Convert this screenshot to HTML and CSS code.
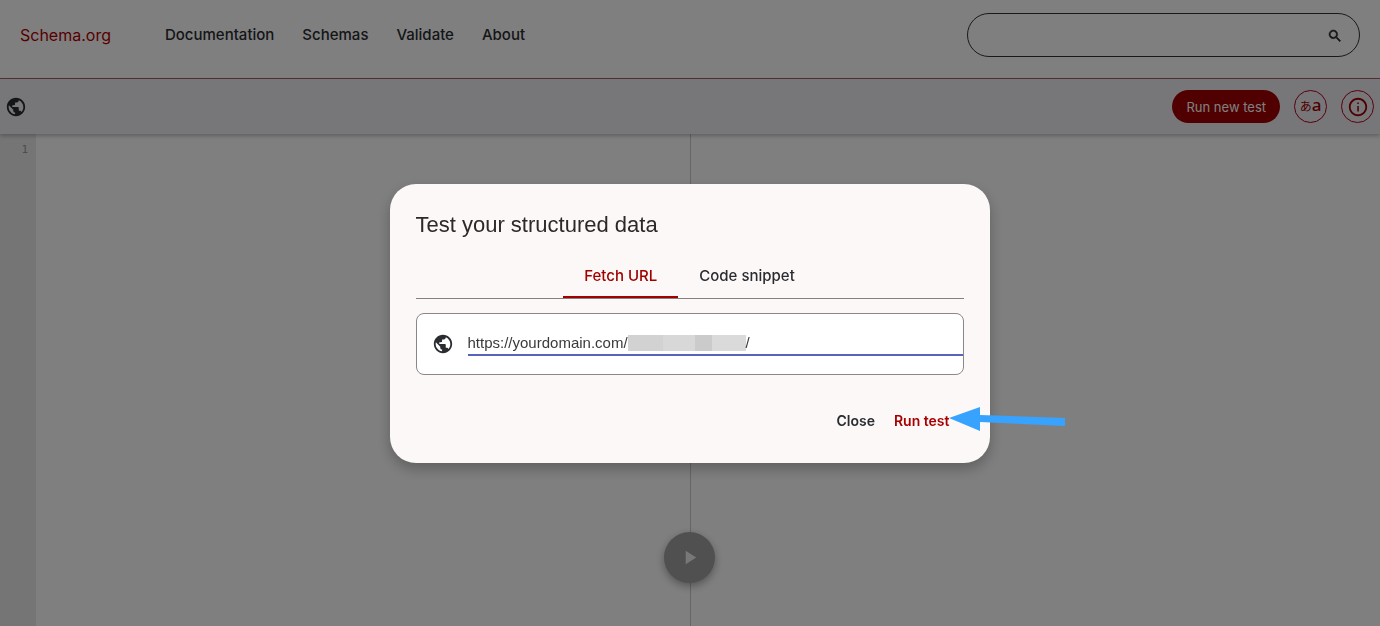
FILE: index.html
```html
<!DOCTYPE html>
<html lang="en">
<head>
<meta charset="utf-8">
<title>Schema.org validator</title>
<link rel="stylesheet" href="styles.css">
</head>
<body>
<svg class="defs" aria-hidden="true">
  <symbol id="globe" viewBox="0 0 24 24"><path d="M12 2C6.48 2 2 6.48 2 12s4.48 10 10 10 10-4.48 10-10S17.52 2 12 2zm-1 17.93c-3.95-.49-7-3.85-7-7.93 0-.62.08-1.21.21-1.79L9 15v1c0 1.1.9 2 2 2v1.93zm6.9-2.54c-.26-.81-1-1.39-1.9-1.39h-1v-3c0-.55-.45-1-1-1H8v-2h2c.55 0 1-.45 1-1V7h2c1.1 0 2-.9 2-2v-.41c2.93 1.19 5 4.06 5 7.41 0 2.08-.8 3.97-2.1 5.39z"/></symbol>
</svg>
<div class="page">
  <header class="header">
    <a class="brand" href="#">Schema.org</a>
    <nav class="nav">
      <a href="#">Documentation</a>
      <a href="#">Schemas</a>
      <a href="#">Validate</a>
      <a href="#">About</a>
    </nav>
    <form class="search">
      <input class="search-input" type="text" aria-label="Search">
      <button class="search-button" type="button" aria-label="Search">
        <svg viewBox="0 0 24 24" width="16" height="16"><path stroke="currentColor" stroke-width=".8" d="M15.5 14h-.79l-.28-.27A6.471 6.471 0 0 0 16 9.5 6.5 6.5 0 1 0 9.5 16c1.61 0 3.09-.59 4.23-1.57l.27.28v.79l5 4.99L20.49 19l-4.99-5zm-6 0C7.01 14 5 11.99 5 9.5S7.01 5 9.5 5 14 7.01 14 9.5 11.99 14 9.5 14z"/></svg>
      </button>
    </form>
  </header>
  <div class="toolbar">
    <svg class="globe" aria-hidden="true"><use href="#globe"/></svg>
    <div class="tools">
      <button class="new-test" type="button">Run new test</button>
      <button class="round" type="button" aria-label="Language"><span class="kana">あ</span><span class="latin">a</span></button>
      <button class="round" type="button" aria-label="Information">
        <svg viewBox="0 0 24 24" width="22" height="22"><path d="M11.2 7h1.7v1.8h-1.7zm0 4h1.7v6h-1.7zM12 2C6.48 2 2 6.48 2 12s4.48 10 10 10 10-4.48 10-10S17.52 2 12 2zm0 18c-4.41 0-8-3.59-8-8s3.59-8 8-8 8 3.59 8 8-3.59 8-8 8z"/></svg>
      </button>
    </div>
  </div>
  <main class="workspace">
    <section class="editor"><div class="gutter">1</div></section>
    <section class="results"></section>
    <button class="play" type="button" aria-label="Run">
      <svg viewBox="0 0 24 24"><path d="M8 5v14l11-7z"/></svg>
    </button>
  </main>
</div>
<div class="scrim">
  <div class="dialog" role="dialog" aria-labelledby="dialog-title">
    <h1 class="title" id="dialog-title">Test your structured data</h1>
    <div class="tabs" role="tablist">
      <button class="tab tab-active" type="button" role="tab" aria-selected="true">Fetch URL</button>
      <button class="tab" type="button" role="tab" aria-selected="false">Code snippet</button>
    </div>
    <div class="url-box">
      <svg class="globe" aria-hidden="true"><use href="#globe"/></svg>
      <div class="url-field">
        <input class="url-input" type="text" aria-label="URL" value="https://yourdomain.com/">
        <span class="mask"></span><span class="slash">/</span>
      </div>
    </div>
    <div class="actions">
      <button class="action" type="button">Close</button>
      <button class="action action-primary" type="button">Run test</button>
    </div>
    <svg class="arrow" viewBox="0 0 116 26" aria-hidden="true"><path d="M0 12 31 1V9L116 12V20L31 16V25Z"/></svg>
  </div>
</div>
</body>
</html>
```

FILE: styles.css
```css
* { box-sizing: border-box; }
body {
  margin: 0;
  font-family: Inter, "Noto Sans CJK JP", sans-serif;
  color: #2a2c30;
  background: #fff;
}
button { font: inherit; color: inherit; border: 0; background: none; padding: 0; }
a { color: inherit; text-decoration: none; }
svg { fill: currentColor; display: block; }
.defs { display: none; }
.page { min-height: 100vh; display: flex; flex-direction: column; }

.header {
  display: flex;
  align-items: center;
  padding: 13px 20px 21px;
  border-bottom: 1px solid #b0606a;
}
.brand { font-size: 16px; line-height: 24px; color: #b00000; margin-right: 54px; }
.nav { display: flex; gap: 28px; font-size: 15px; line-height: 24px; font-weight: 500; }
.search {
  display: flex;
  align-items: center;
  width: 393px;
  height: 44px;
  margin-left: auto;
  padding: 0 16px;
  border: 1px solid #333;
  border-radius: 22px;
}
.search-input { flex: 1; min-width: 0; border: 0; outline: 0; background: none; font: inherit; }
.search-button { padding-top: 2px; }

.toolbar {
  position: relative;
  z-index: 1;
  display: flex;
  align-items: center;
  justify-content: space-between;
  height: 55px;
  padding: 0 6px 0 5px;
  background: #efeff4;
  box-shadow: 0 2px 4px rgba(0, 0, 0, .25);
}
.globe { width: 22px; height: 22px; flex: none; }
.tools { display: flex; gap: 14px; align-items: center; }
.new-test {
  height: 33px;
  padding: 0 14px;
  border-radius: 17px;
  background: #a00000;
  color: #fff;
  font-size: 13px;
}
.round {
  display: flex;
  align-items: center;
  justify-content: center;
  width: 33px;
  height: 33px;
  border: 1px solid #b0001a;
  border-radius: 50%;
  color: #a00000;
  line-height: 16px;
}
.kana { font-family: "Noto Sans CJK JP", sans-serif; font-size: 12px; padding-bottom: 2px; }
.latin { font: 500 17px/16px "Noto Sans", sans-serif; padding-bottom: 4px; }

.workspace { position: relative; flex: 1; display: flex; }
.editor { flex: 1; display: flex; border-right: 1px solid #ccc; }
.results { flex: 1; }
.gutter {
  width: 36px;
  padding: 9px 8px 0 0;
  background: #ebebeb;
  color: #999;
  font: 11px/14px "DejaVu Sans Mono", monospace;
  text-align: right;
}
.play {
  position: absolute;
  left: calc(50% - 26px);
  bottom: 43px;
  width: 51px;
  height: 51px;
  border-radius: 50%;
  background: #a0a0a0;
  color: #f0f0f0;
  display: flex;
  align-items: center;
  justify-content: center;
  box-shadow: 0 3px 8px rgba(0, 0, 0, .35);
}
.play svg { width: 23px; height: 23px; }

.scrim {
  position: fixed;
  inset: 0;
  z-index: 2;
  display: flex;
  align-items: center;
  justify-content: center;
  padding: 20px 1px 0 0;
  background: rgba(0, 0, 0, .5);
}
.dialog {
  position: relative;
  width: 600px;
  padding: 26px;
  border-radius: 26px;
  background: #fcf8f7;
  box-shadow: 0 6px 14px rgba(0, 0, 0, .25);
}
.title {
  margin: 0;
  font: 400 22px/30px "Liberation Sans", Arial, sans-serif;
  color: #2b2929;
}
.tabs {
  display: flex;
  justify-content: center;
  margin-top: 14px;
  border-bottom: 1px solid #857f7f;
}
.tab { height: 44px; padding: 0 21px; font-size: 15px; line-height: 24px; font-weight: 500; }
.tab-active { color: #a00000; box-shadow: inset 0 -2px #a00000; }
.url-box {
  display: flex;
  align-items: center;
  gap: 14px;
  height: 62px;
  margin-top: 14px;
  padding-left: 15px;
  border: 1px solid #8c8787;
  border-radius: 8px;
  background: #fff;
}
.url-field {
  flex: 1;
  display: flex;
  align-items: center;
  height: 24px;
  border-bottom: 2px solid #5a62c0;
  font: 15px/22px "Liberation Sans", Arial, sans-serif;
  color: #3a3a3a;
}
.url-input { width: 160px; padding: 0; border: 0; outline: 0; background: none; font: inherit; color: inherit; }
.mask {
  width: 118px;
  height: 16px;
  background: linear-gradient(90deg, #d2d2d2 0 30%, #d8d8d8 30% 57%, #cbcbcb 57% 71%, #dadada 71%);
}
.actions { display: flex; justify-content: flex-end; gap: 19px; margin-top: 34px; padding: 0 14px 4px 0; }
.action { font-size: 14px; line-height: 24px; font-weight: 600; }
.action-primary { color: #a80000; }
.arrow { position: absolute; right: -75px; bottom: 31px; width: 116px; height: 26px; color: #38a3ff; }
```
